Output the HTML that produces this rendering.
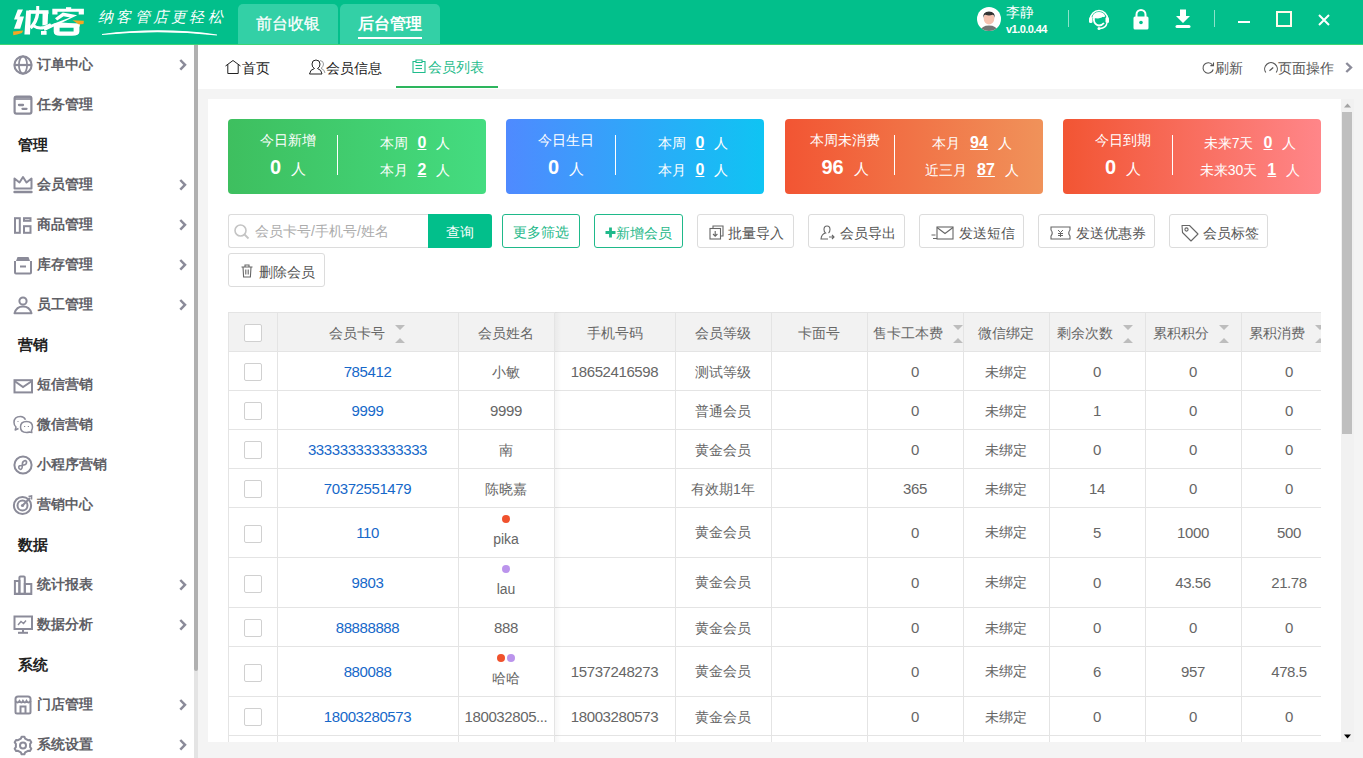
<!DOCTYPE html><html><head><meta charset="utf-8"><style>
*{box-sizing:border-box;margin:0;padding:0}
html,body{width:1363px;height:758px;overflow:hidden;background:#f4f4f4;font-family:"Liberation Sans",sans-serif;}
.abs{position:absolute}
svg{position:absolute;overflow:visible}
#hdr{position:absolute;left:0;top:0;width:1363px;height:45px;background:#02bf8b;border-bottom:1px solid #3fd474}
.htab{position:absolute;top:4px;height:40px;background:#33d0a6;border-radius:5px 5px 0 0;color:#fff;font-size:16px;text-align:center;line-height:38px;font-weight:bold}
#side{position:absolute;left:0;top:45px;width:198px;height:713px;background:#fff}
.mi{position:absolute;left:0;width:194px;height:40px;font-size:14px;color:#606066;font-weight:bold}
.mi .t{position:absolute;left:37px;top:11px;line-height:18px;white-space:nowrap}
.grp{position:absolute;left:18px;font-size:15px;color:#222;font-weight:bold;line-height:18px}
#sscroll{position:absolute;left:194px;top:45px;width:4px;height:713px;background:#e4e4e4}
#sthumb{position:absolute;left:194px;top:45px;width:4px;height:626px;background:#b0b0b0;border-radius:0 0 2px 2px}
#tabbar{position:absolute;left:198px;top:45px;width:1165px;height:44px;background:#fff}
.tt{position:absolute;top:13px;font-size:14px;color:#222;line-height:18px;white-space:nowrap}
#panel{position:absolute;left:208px;top:99px;width:1133px;height:643px;background:#fff;overflow:hidden}
</style></head><body>
<div id="hdr">
<svg style="left:0;top:0" width="90" height="40" viewBox="0 0 90 40"><path d="M17.8 9.4 H23 L19.6 16.4 H24 L20.2 28.7 H14 L17.4 19.6 H14 Z" fill="#fff"/><path d="M13 31.6 L23.2 30.4 L22 33 L17 34.6 L13.3 35.2 Z" fill="#f5a623"/><path d="M26.2 10.4 H31 L30 34.6 H24.4 Z" fill="#fff"/><path d="M29 10.2 H48.5 V13.8 H29 Z" fill="#fff"/><path d="M36.2 6 H39.2 V14 H36.2 Z" fill="#fff"/><path d="M42.6 12 H48.2 L47.6 24.5 L42.4 25.5 Z" fill="#fff"/><path d="M37.5 13.5 Q36.5 22 30.5 28" stroke="#fff" stroke-width="3.4" fill="none"/><path d="M33 25.5 Q38 29 44 27.5 Q49 26 51 24.5" stroke="#fff" stroke-width="3" fill="none"/><path d="M41 31 H46.6 V34.8 H41 Z" fill="#fff"/><path d="M66 7.2 H71.2 V9.5 H66 Z" fill="#fff"/><path d="M52.3 8.7 H83.9 V14.4 H78.7 V11.8 H57.5 V14.4 H52.3 Z" fill="#fff"/><path d="M55 18.2 L62.8 12.6 L77.2 15.2 L44.6 31 L43.4 27.6 L70 17.4 L63.6 16.2 L57.2 20.6 Z" fill="#fff"/><path d="M59.5 22.2 L80 24 L79.5 26.8 L58.5 25 Z" fill="#fff"/><path d="M53.7 23.6 H79.4 V31.5 Q79.4 35.8 72 35.8 H60 Q53.7 35.8 53.7 31.5 Z M59.6 27.8 V31.4 H73.6 V27.8 Z" fill="#fff" fill-rule="evenodd"/><path d="M72.5 20.2 L83.9 20.8 L83.5 23.9 L79 24.6 Z" fill="#f5a623"/></svg>
<div class="abs" style="left:98px;top:7px;font-size:15px;color:#fff;line-height:20px;letter-spacing:3.3px;font-style:italic;font-family:'Liberation Serif',serif">纳客管店更轻松</div>
<svg style="left:100px;top:27px" width="130" height="12"><path d="M2 7.5 Q 60 0 117 8 Q 60 1.8 2 7.5 Z" stroke="#fff" stroke-width="1.1" fill="#fff"/></svg>
<div class="htab" style="left:238px;width:100px;font-weight:normal;line-height:40px;-webkit-text-stroke:0.25px #fff">前台收银</div>
<div class="htab" style="left:340px;width:100px;line-height:40px">后台管理<div class="abs" style="left:18px;top:33px;width:64px;height:2px;background:#fff"></div></div>
<svg style="left:977px;top:7px" width="24" height="24" viewBox="0 0 24 24"><defs><clipPath id="av"><circle cx="12" cy="12" r="12"/></clipPath></defs><circle cx="12" cy="12" r="12" fill="#fff"/><g clip-path="url(#av)"><path d="M3 25 Q4 18.5 12 18.5 Q20 18.5 21 25 Z" fill="#757575"/><ellipse cx="12" cy="11.5" rx="5.3" ry="6" fill="#f5c2b0"/><path d="M6.3 11 Q5.5 4.5 12 4.5 Q18.5 4.5 17.7 11 Q17 7.5 15.5 7.8 Q12 9 8.5 7.8 Q7 7.5 6.3 11 Z" fill="#333"/></g></svg>
<div class="abs" style="left:1006px;top:2px;font-size:14px;line-height:20px;color:#fff">李静</div>
<div class="abs" style="left:1006px;top:22px;font-size:11px;line-height:14px;color:#fff;font-weight:bold;letter-spacing:-0.55px">v1.0.0.44</div>
<div class="abs" style="left:1068px;top:10px;width:1px;height:17px;background:rgba(255,255,255,0.55)"></div>
<div class="abs" style="left:1214px;top:10px;width:1px;height:17px;background:rgba(255,255,255,0.55)"></div>
<svg style="left:1088px;top:8px" width="22" height="22" viewBox="0 0 22 22"><path d="M2.5 11 A8.5 8.5 0 0 1 19.5 11" stroke="#fff" stroke-width="1.6" fill="none"/><rect x="1" y="9" width="3.5" height="6" rx="1.5" fill="#fff"/><rect x="17.5" y="9" width="3.5" height="6" rx="1.5" fill="#fff"/><path d="M5 10 Q6 5 11 5 Q15 5 16.5 8.5 L15 7 Q14 9.5 10 9.5 Q7 9.5 6 8.5 Q5.5 12 6.5 14.5 Q8.5 17.5 11 17.5 Q14 17.5 16 15" stroke="#fff" stroke-width="1.8" fill="none"/><path d="M5 10 Q4.8 6 8 5 L15 5.5 Q16.5 7 16 9 Q14 8 11 9 Q8 10 6 8.5 Z" fill="#fff"/><path d="M19 15 Q18 20 12 20.5" stroke="#fff" stroke-width="1.4" fill="none"/><circle cx="11" cy="20.5" r="1.5" fill="#fff"/></svg>
<svg style="left:1133px;top:9px" width="16" height="21" viewBox="0 0 16 21"><path d="M3.5 8 V5.5 A4.5 4.5 0 0 1 12.5 5.5 V8" stroke="#fff" stroke-width="2" fill="none"/><rect x="0.5" y="7.5" width="15" height="13" rx="1.5" fill="#fff"/><circle cx="8" cy="13.5" r="1.8" fill="#02bf8b"/></svg>
<svg style="left:1175px;top:9px" width="16" height="20" viewBox="0 0 16 20"><path d="M5 0.5 H11 V7 H15 L8 14 L1 7 H5 Z" fill="#fff"/><rect x="0.5" y="16" width="15" height="3" rx="1.5" fill="#fff"/></svg>
<div class="abs" style="left:1238px;top:21px;width:12px;height:2px;background:#fff"></div>
<div class="abs" style="left:1276px;top:11px;width:16px;height:16px;border:2px solid #fffbea"></div>
<svg style="left:1318px;top:14px" width="12" height="12"><path d="M1 1 L11 11 M11 1 L1 11" stroke="#fff" stroke-width="2"/></svg>
</div>
<div id="side">
<div class="mi" style="top:-1px"><svg style="left:13px;top:11px" width="20" height="20" viewBox="0 0 20 20"><circle cx="10" cy="10" r="8.6" stroke="#8b8b99" stroke-width="2.1" fill="none"/><ellipse cx="10" cy="10" rx="4.1" ry="8.6" stroke="#8b8b99" stroke-width="1.8" fill="none"/><line x1="1.5" y1="10" x2="18.5" y2="10" stroke="#8b8b99" stroke-width="2.2"/></svg><div class="t">订单中心</div>
<svg style="left:179px;top:15px" width="8" height="12"><polyline points="1.3,1 6,5.8 1.3,10.6" stroke="#8b8b99" stroke-width="2.5" fill="none"/></svg>
</div>
<div class="mi" style="top:39px"><svg style="left:13px;top:11px" width="20" height="20" viewBox="0 0 20 20"><rect x="1.6" y="1.6" width="16.8" height="17" rx="1.8" stroke="#8b8b99" stroke-width="2.2" fill="none"/><rect x="1.6" y="1.6" width="16.8" height="3.4" fill="#8b8b99" fill-opacity="0.85"/><line x1="6" y1="10" x2="10" y2="10" stroke="#8b8b99" stroke-width="2.3" stroke-linecap="round"/><line x1="9.5" y1="13.8" x2="13.5" y2="13.8" stroke="#8b8b99" stroke-width="2.3" stroke-linecap="round"/></svg><div class="t">任务管理</div>
</div>
<div class="grp" style="top:91px">管理</div>
<div class="mi" style="top:119px"><svg style="left:13px;top:11px" width="20" height="20" viewBox="0 0 20 20"><path d="M1.5 13.5 V3.5 L6.5 7.5 L10 2 L13.5 7.5 L18.5 3.5 V13.5 Z" stroke="#8b8b99" stroke-width="2" fill="none" stroke-linejoin="round"/><line x1="1.5" y1="17" x2="18.5" y2="17" stroke="#8b8b99" stroke-width="2.4" stroke-linecap="round"/></svg><div class="t">会员管理</div>
<svg style="left:179px;top:15px" width="8" height="12"><polyline points="1.3,1 6,5.8 1.3,10.6" stroke="#8b8b99" stroke-width="2.5" fill="none"/></svg>
</div>
<div class="mi" style="top:159px"><svg style="left:13px;top:11px" width="20" height="20" viewBox="0 0 20 20"><rect x="2" y="3.2" width="4.8" height="14.6" stroke="#8b8b99" stroke-width="2" fill="none"/><rect x="11" y="3.2" width="6.5" height="2.6" stroke="#8b8b99" stroke-width="2" fill="none"/><rect x="11" y="11.2" width="6.5" height="6.6" stroke="#8b8b99" stroke-width="2" fill="none"/></svg><div class="t">商品管理</div>
<svg style="left:179px;top:15px" width="8" height="12"><polyline points="1.3,1 6,5.8 1.3,10.6" stroke="#8b8b99" stroke-width="2.5" fill="none"/></svg>
</div>
<div class="mi" style="top:199px"><svg style="left:13px;top:11px" width="20" height="20" viewBox="0 0 20 20"><path d="M3 6 L4.5 2 H15.5 L17 6 Z" fill="#8b8b99"/><path d="M2 6 V17.5 Q2 18.5 3 18.5 H17 Q18 18.5 18 17.5 V6" stroke="#8b8b99" stroke-width="2" fill="none"/><line x1="7" y1="11.5" x2="13" y2="11.5" stroke="#8b8b99" stroke-width="2" fill="none"/></svg><div class="t">库存管理</div>
<svg style="left:179px;top:15px" width="8" height="12"><polyline points="1.3,1 6,5.8 1.3,10.6" stroke="#8b8b99" stroke-width="2.5" fill="none"/></svg>
</div>
<div class="mi" style="top:239px"><svg style="left:13px;top:11px" width="20" height="20" viewBox="0 0 20 20"><circle cx="10" cy="6" r="3.6" stroke="#8b8b99" stroke-width="2" fill="none"/><path d="M1.5 18.2 Q3.5 11.5 10 11.5 Q16.5 11.5 18.5 18.2 Z" stroke="#8b8b99" stroke-width="2" fill="none" stroke-linejoin="round"/></svg><div class="t">员工管理</div>
<svg style="left:179px;top:15px" width="8" height="12"><polyline points="1.3,1 6,5.8 1.3,10.6" stroke="#8b8b99" stroke-width="2.5" fill="none"/></svg>
</div>
<div class="grp" style="top:291px">营销</div>
<div class="mi" style="top:319px"><svg style="left:13px;top:11px" width="20" height="20" viewBox="0 0 20 20"><rect x="1.5" y="5.2" width="17.5" height="12.2" stroke="#8b8b99" stroke-width="2" fill="none"/><polyline points="1.5,6 10,12 19,6" stroke="#8b8b99" stroke-width="2" fill="none"/></svg><div class="t">短信营销</div>
</div>
<div class="mi" style="top:359px"><svg style="left:13px;top:11px" width="20" height="20" viewBox="0 0 20 20"><path d="M12.5 4.8 Q11 1.5 7.5 1.5 Q1 1.5 1 7.5 Q1 10.5 3 12 L2.2 15 L5.5 13.5" stroke="#8b8b99" stroke-width="1.5" fill="none" stroke-linejoin="round"/><path d="M18.8 17.5 L18.5 15.5 Q19.5 14 19.5 12 Q19.5 6.5 13.5 6.5 Q7.5 6.5 7.5 12 Q7.5 17.5 13.5 17.5 Q15 17.5 16.5 17 Z" stroke="#8b8b99" stroke-width="1.5" fill="#fff" stroke-linejoin="round"/><line x1="11" y1="11.5" x2="12.2" y2="11.5" stroke="#8b8b99" stroke-width="1.2"/><line x1="14.8" y1="11.5" x2="16" y2="11.5" stroke="#8b8b99" stroke-width="1.2"/><line x1="4.5" y1="6.5" x2="5.5" y2="6.5" stroke="#8b8b99" stroke-width="1.2"/></svg><div class="t">微信营销</div>
</div>
<div class="mi" style="top:399px"><svg style="left:13px;top:11px" width="20" height="20" viewBox="0 0 20 20"><circle cx="10" cy="10" r="8.6" stroke="#8b8b99" stroke-width="2" fill="none"/><path d="M6 13.5 Q5 10.5 8 10.5 L11 10 Q14 9.5 13.5 6.5 Q12.5 5 11 6 Q9 7 9.5 10 L9 13 Q8 15.5 6 13.5" stroke="#8b8b99" stroke-width="1.6" fill="none"/></svg><div class="t">小程序营销</div>
</div>
<div class="mi" style="top:439px"><svg style="left:13px;top:11px" width="20" height="20" viewBox="0 0 20 20"><circle cx="9.5" cy="10.5" r="8.6" stroke="#8b8b99" stroke-width="2" fill="none"/><circle cx="9.5" cy="10.5" r="5" stroke="#8b8b99" stroke-width="2" fill="none"/><circle cx="9.5" cy="10.5" r="1.6" fill="#8b8b99"/><line x1="9.5" y1="10.5" x2="17" y2="3" stroke="#8b8b99" stroke-width="2" fill="none"/><path d="M15.5 1.5 L18.5 1 L18.5 4.5" stroke="#8b8b99" stroke-width="1.6" fill="none"/></svg><div class="t">营销中心</div>
</div>
<div class="grp" style="top:491px">数据</div>
<div class="mi" style="top:519px"><svg style="left:13px;top:11px" width="20" height="20" viewBox="0 0 20 20"><rect x="1.9" y="6" width="4.5" height="13" stroke="#8b8b99" stroke-width="2" fill="none"/><rect x="6.4" y="1.5" width="5.4" height="17.5" rx="1" stroke="#8b8b99" stroke-width="2" fill="none"/><rect x="11.8" y="9" width="6.5" height="10" stroke="#8b8b99" stroke-width="2" fill="none"/><line x1="1" y1="18.8" x2="19" y2="18.8" stroke="#8b8b99" stroke-width="2.2"/></svg><div class="t">统计报表</div>
<svg style="left:179px;top:15px" width="8" height="12"><polyline points="1.3,1 6,5.8 1.3,10.6" stroke="#8b8b99" stroke-width="2.5" fill="none"/></svg>
</div>
<div class="mi" style="top:559px"><svg style="left:13px;top:11px" width="20" height="20" viewBox="0 0 20 20"><rect x="1.5" y="1.5" width="17.5" height="12.5" stroke="#8b8b99" stroke-width="2" fill="none"/><line x1="10" y1="14" x2="10" y2="17" stroke="#8b8b99" stroke-width="2" fill="none"/><line x1="5" y1="17.8" x2="15" y2="17.8" stroke="#8b8b99" stroke-width="2"/><polyline points="5,10 8,6.5 10.5,8.5 13,5.5" stroke="#8b8b99" stroke-width="1.4" fill="none"/></svg><div class="t">数据分析</div>
<svg style="left:179px;top:15px" width="8" height="12"><polyline points="1.3,1 6,5.8 1.3,10.6" stroke="#8b8b99" stroke-width="2.5" fill="none"/></svg>
</div>
<div class="grp" style="top:611px">系统</div>
<div class="mi" style="top:639px"><svg style="left:13px;top:11px" width="20" height="20" viewBox="0 0 20 20"><path d="M2.5 4 Q2.5 1.5 5 1.5 H15 Q17.5 1.5 17.5 4 V6.5" stroke="#8b8b99" stroke-width="2" fill="none"/><path d="M2.5 4 V17 Q2.5 18.5 4 18.5 H16 Q17.5 18.5 17.5 17 V6" stroke="#8b8b99" stroke-width="2" fill="none"/><path d="M2.5 6 Q4.5 9 6.5 6 Q8.5 9 10 6 Q12 9 13.5 6 Q15.5 9 17.5 6" stroke="#8b8b99" stroke-width="2" fill="none"/><path d="M7.5 18.5 V11.5 H12.5 V18.5" stroke="#8b8b99" stroke-width="2" fill="none"/></svg><div class="t">门店管理</div>
<svg style="left:179px;top:15px" width="8" height="12"><polyline points="1.3,1 6,5.8 1.3,10.6" stroke="#8b8b99" stroke-width="2.5" fill="none"/></svg>
</div>
<div class="mi" style="top:679px"><svg style="left:13px;top:11px" width="20" height="20" viewBox="0 0 20 20"><path d="M7.87 3.52 L8.61 1.71 L11.39 1.71 L12.13 3.52 L14.98 5.16 L16.92 4.90 L18.31 7.31 L17.11 8.86 L17.11 12.14 L18.31 13.69 L16.92 16.10 L14.98 15.84 L12.13 17.48 L11.39 19.29 L8.61 19.29 L7.87 17.48 L5.02 15.84 L3.08 16.10 L1.69 13.69 L2.89 12.14 L2.89 8.86 L1.69 7.31 L3.08 4.90 L5.02 5.16 Z" stroke="#8b8b99" stroke-width="2" fill="none" stroke-linejoin="round"/><circle cx="10" cy="10.5" r="3" stroke="#8b8b99" stroke-width="2" fill="none"/></svg><div class="t">系统设置</div>
<svg style="left:179px;top:15px" width="8" height="12"><polyline points="1.3,1 6,5.8 1.3,10.6" stroke="#8b8b99" stroke-width="2.5" fill="none"/></svg>
</div>
</div>
<div id="sscroll"></div><div id="sthumb"></div>
<div id="tabbar"></div>
<svg style="left:225px;top:60px" width="16" height="15"><path d="M0.5 6 L8 0.5 L15.5 6 M2.8 4.3 V13.5 H13.2 V4.3" stroke="#222" stroke-width="1" fill="none"/></svg>
<div class="tt" style="left:242px;top:59px">首页</div>
<svg style="left:309px;top:59px" width="17" height="16"><path d="M7 1 Q3 1 3 5 Q3 8.5 5.5 9.5 Q1 10.5 0.5 15 H13 Q12.5 10.5 8.5 9.5 Q11 8.5 11 5 Q11 1 7 1 Z" stroke="#222" stroke-width="1" fill="none"/><path d="M11 1.5 Q14.5 2 14.5 5 Q14.5 8 12 9.3 Q15.5 10.5 16 14" stroke="#999" stroke-width="1" fill="none"/></svg>
<div class="tt" style="left:326px;top:59px">会员信息</div>
<svg style="left:412px;top:59px" width="14" height="15"><path d="M4 2.5 H1 V13.5 H13 V2.5 H10" stroke="#1fbc8c" stroke-width="1.1" fill="none"/><path d="M4 3.5 V1 H10 V3.5 Z" stroke="#1fbc8c" stroke-width="1.1" fill="none"/><line x1="3.5" y1="6.5" x2="10" y2="6.5" stroke="#1fbc8c" stroke-width="1.1"/><line x1="3.5" y1="9.5" x2="10" y2="9.5" stroke="#1fbc8c" stroke-width="1.1"/></svg>
<div class="tt" style="left:428px;top:58px;color:#1fbc8c">会员列表</div>
<div class="abs" style="left:396px;top:86px;width:102px;height:2px;background:#2db55d"></div>
<svg style="left:1202px;top:62px" width="13" height="12"><path d="M10.5 3 A5.2 5.2 0 1 0 11.2 7.5" stroke="#555" stroke-width="1.1" fill="none"/><path d="M11.5 0.5 V3.6 H8.4" stroke="#555" stroke-width="1.1" fill="none"/></svg>
<div class="tt" style="left:1215px;top:59px;color:#555">刷新</div>
<svg style="left:1264px;top:61px" width="14" height="15"><path d="M1.8 11.5 A6.3 6.3 0 1 1 12.2 11.5" stroke="#555" stroke-width="1.1" fill="none"/><line x1="5.5" y1="9.8" x2="9.2" y2="6.5" stroke="#555" stroke-width="1.2"/></svg>
<div class="tt" style="left:1278px;top:59px;color:#555">页面操作</div>
<svg style="left:1345px;top:62px" width="8" height="11"><polyline points="1.3,1 6,5.5 1.3,10" stroke="#8b8b99" stroke-width="2.4" fill="none"/></svg>
<div id="panel">
<div class="abs card" style="left:20px;top:20px;width:258px;height:75px;border-radius:4px;background:linear-gradient(90deg,#3ebf5f,#44dc80);color:#fff">
<div class="abs" style="left:0;width:120px;top:12px;text-align:center;font-size:14px;line-height:18px">今日新增</div>
<div class="abs" style="left:0;width:120px;top:36px;text-align:center;line-height:24px;white-space:nowrap"><span style="font-size:20px;font-weight:bold">0</span><span style="font-size:15px;margin-left:10px">人</span></div>
<div class="abs" style="left:109px;top:16px;width:1px;height:40px;background:#fff"></div>
<div class="abs" style="left:112px;width:150px;top:15px;text-align:center;line-height:18px;font-size:14px;white-space:nowrap">本周<span style="font-size:16px;font-weight:bold;text-decoration:underline;margin:0 10px">0</span>人</div>
<div class="abs" style="left:112px;width:150px;top:42px;text-align:center;line-height:18px;font-size:14px;white-space:nowrap">本月<span style="font-size:16px;font-weight:bold;text-decoration:underline;margin:0 10px">2</span>人</div>
</div>
<div class="abs card" style="left:298px;top:20px;width:258px;height:75px;border-radius:4px;background:linear-gradient(90deg,#4f8aff,#0fc4f3);color:#fff">
<div class="abs" style="left:0;width:120px;top:12px;text-align:center;font-size:14px;line-height:18px">今日生日</div>
<div class="abs" style="left:0;width:120px;top:36px;text-align:center;line-height:24px;white-space:nowrap"><span style="font-size:20px;font-weight:bold">0</span><span style="font-size:15px;margin-left:10px">人</span></div>
<div class="abs" style="left:109px;top:16px;width:1px;height:40px;background:#fff"></div>
<div class="abs" style="left:112px;width:150px;top:15px;text-align:center;line-height:18px;font-size:14px;white-space:nowrap">本周<span style="font-size:16px;font-weight:bold;text-decoration:underline;margin:0 10px">0</span>人</div>
<div class="abs" style="left:112px;width:150px;top:42px;text-align:center;line-height:18px;font-size:14px;white-space:nowrap">本月<span style="font-size:16px;font-weight:bold;text-decoration:underline;margin:0 10px">0</span>人</div>
</div>
<div class="abs card" style="left:577px;top:20px;width:258px;height:75px;border-radius:4px;background:linear-gradient(90deg,#f25533,#f0925a);color:#fff">
<div class="abs" style="left:0;width:120px;top:12px;text-align:center;font-size:14px;line-height:18px">本周未消费</div>
<div class="abs" style="left:0;width:120px;top:36px;text-align:center;line-height:24px;white-space:nowrap"><span style="font-size:20px;font-weight:bold">96</span><span style="font-size:15px;margin-left:10px">人</span></div>
<div class="abs" style="left:109px;top:16px;width:1px;height:40px;background:#fff"></div>
<div class="abs" style="left:112px;width:150px;top:15px;text-align:center;line-height:18px;font-size:14px;white-space:nowrap">本月<span style="font-size:16px;font-weight:bold;text-decoration:underline;margin:0 10px">94</span>人</div>
<div class="abs" style="left:112px;width:150px;top:42px;text-align:center;line-height:18px;font-size:14px;white-space:nowrap">近三月<span style="font-size:16px;font-weight:bold;text-decoration:underline;margin:0 10px">87</span>人</div>
</div>
<div class="abs card" style="left:855px;top:20px;width:258px;height:75px;border-radius:4px;background:linear-gradient(90deg,#f25533,#ff8689);color:#fff">
<div class="abs" style="left:0;width:120px;top:12px;text-align:center;font-size:14px;line-height:18px">今日到期</div>
<div class="abs" style="left:0;width:120px;top:36px;text-align:center;line-height:24px;white-space:nowrap"><span style="font-size:20px;font-weight:bold">0</span><span style="font-size:15px;margin-left:10px">人</span></div>
<div class="abs" style="left:109px;top:16px;width:1px;height:40px;background:#fff"></div>
<div class="abs" style="left:112px;width:150px;top:15px;text-align:center;line-height:18px;font-size:14px;white-space:nowrap">未来7天<span style="font-size:16px;font-weight:bold;text-decoration:underline;margin:0 10px">0</span>人</div>
<div class="abs" style="left:112px;width:150px;top:42px;text-align:center;line-height:18px;font-size:14px;white-space:nowrap">未来30天<span style="font-size:16px;font-weight:bold;text-decoration:underline;margin:0 10px">1</span>人</div>
</div>
<div class="abs" style="left:20px;top:115px;width:200px;height:34px;border:1px solid #dcdcdc;border-right:none;border-radius:3px 0 0 3px;background:#fff">
<svg style="left:5px;top:9px" width="16" height="16"><circle cx="6.5" cy="6.5" r="5.5" stroke="#c4c4c4" stroke-width="1.6" fill="none"/><line x1="10.5" y1="10.5" x2="14.5" y2="14.5" stroke="#c4c4c4" stroke-width="1.8"/></svg>
<div class="abs" style="left:26px;top:7px;font-size:14px;line-height:18px;color:#acacac;white-space:nowrap">会员卡号/手机号/姓名</div></div>
<div class="abs" style="left:220px;top:115px;width:64px;height:34px;background:#02bf8b;border-radius:0 3px 3px 0;color:#fff;font-size:14px;line-height:36px;text-align:center">查询</div>
<div class="abs" style="left:294px;top:115px;width:78px;height:34px;border:1px solid #1fb98a;border-radius:3px;color:#1fb98a;font-size:14px;line-height:35px;text-align:center;background:#fff">更多筛选</div>
<div class="abs" style="left:386px;top:115px;width:89px;height:34px;border:1px solid #1fb98a;border-radius:3px;color:#1fb98a;font-size:14px;line-height:32px;background:#fff">
<svg style="left:10px;top:12px" width="11" height="11"><path d="M5.5 0.5 V10.5 M0.5 5.5 H10.5" stroke="#1fb98a" stroke-width="2.8"/></svg><div class="abs" style="left:21px;top:9px;line-height:18px;white-space:nowrap">新增会员</div></div>
<div class="abs" style="left:489px;top:115px;width:97px;height:34px;border:1px solid #dcdcdc;border-radius:3px;background:#fff">
<svg style="left:11px;top:10px" width="15" height="15"><path d="M4 3 V1 H14 V11 H12" stroke="#666" stroke-width="1.1" fill="none"/><rect x="1" y="3.5" width="10.5" height="10.5" stroke="#666" stroke-width="1.1" fill="none"/><path d="M6.2 6 V11 M4 9 L6.2 11.2 L8.4 9" stroke="#666" stroke-width="1.1" fill="none"/></svg>
<div class="abs" style="left:30px;top:9px;font-size:14px;line-height:18px;color:#555;white-space:nowrap">批量导入</div></div>
<div class="abs" style="left:600px;top:115px;width:97px;height:34px;border:1px solid #dcdcdc;border-radius:3px;background:#fff">
<svg style="left:11px;top:10px" width="15" height="15"><path d="M7 1 Q4 1 4 4.5 Q4 7 5.5 8 Q1.5 9 1 14 H8" stroke="#666" stroke-width="1.1" fill="none"/><path d="M7 1 Q10 1 10 4.5 Q10 7 8.5 8" stroke="#666" stroke-width="1.1" fill="none"/><path d="M9 12 H14 M12 10 L14 12 L12 14" stroke="#666" stroke-width="1.1" fill="none"/></svg>
<div class="abs" style="left:31px;top:9px;font-size:14px;line-height:18px;color:#555;white-space:nowrap">会员导出</div></div>
<div class="abs" style="left:711px;top:115px;width:105px;height:34px;border:1px solid #dcdcdc;border-radius:3px;background:#fff">
<svg style="left:11px;top:11px" width="23" height="14"><rect x="6" y="1" width="16" height="12" stroke="#666" stroke-width="1.1" fill="none"/><polyline points="6,1.5 14,7.5 22,1.5" stroke="#666" stroke-width="1.1" fill="none"/><path d="M0.5 9 H4.5 M2 12.5 H6" stroke="#666" stroke-width="1.1" fill="none"/></svg>
<div class="abs" style="left:39px;top:9px;font-size:14px;line-height:18px;color:#555;white-space:nowrap">发送短信</div></div>
<div class="abs" style="left:830px;top:115px;width:117px;height:34px;border:1px solid #dcdcdc;border-radius:3px;background:#fff">
<svg style="left:11px;top:11px" width="21" height="14"><path d="M1 1 H20 V4 Q17.5 7 20 10 V13 H1 V10 Q3.5 7 1 4 Z" stroke="#666" stroke-width="1.1" fill="none"/><path d="M8 4 L10.5 6.5 L13 4 M10.5 6.5 V11 M8 7.5 H13 M8 9.5 H13" stroke="#666" stroke-width="1" fill="none"/></svg>
<div class="abs" style="left:37px;top:9px;font-size:14px;line-height:18px;color:#555;white-space:nowrap">发送优惠券</div></div>
<div class="abs" style="left:961px;top:115px;width:99px;height:34px;border:1px solid #dcdcdc;border-radius:3px;background:#fff">
<svg style="left:11px;top:9px" width="18" height="18"><path d="M1 1.5 H8.5 L17 10 L10 17 L1.5 8.5 Z" stroke="#666" stroke-width="1.1" fill="none" stroke-linejoin="round"/><circle cx="5.5" cy="5.5" r="1.6" stroke="#666" stroke-width="1.1" fill="none"/></svg>
<div class="abs" style="left:33px;top:9px;font-size:14px;line-height:18px;color:#555;white-space:nowrap">会员标签</div></div>
<div class="abs" style="left:20px;top:154px;width:97px;height:34px;border:1px solid #dcdcdc;border-radius:3px;background:#fff">
<svg style="left:12px;top:10px" width="12" height="14"><path d="M0.5 3 H11.5 M4 3 V1 H8 V3 M2 3 L2.6 13 H9.4 L10 3 M4.8 5.5 V10.5 M7.2 5.5 V10.5" stroke="#666" stroke-width="1.1" fill="none"/></svg>
<div class="abs" style="left:30px;top:9px;font-size:14px;line-height:18px;color:#555;white-space:nowrap">删除会员</div></div>
<div class="abs" style="left:20px;top:213px;width:1093px;height:430px;overflow:hidden">
<div class="abs" style="left:0;top:0;width:1200px;height:39px;background:#f2f2f2"></div>
<div class="abs" style="left:0;top:0px;width:1200px;height:1px;background:#e4e4e4"></div>
<div class="abs" style="left:0;top:39px;width:1200px;height:1px;background:#e4e4e4"></div>
<div class="abs" style="left:0;top:78px;width:1200px;height:1px;background:#e4e4e4"></div>
<div class="abs" style="left:0;top:117px;width:1200px;height:1px;background:#e4e4e4"></div>
<div class="abs" style="left:0;top:156px;width:1200px;height:1px;background:#e4e4e4"></div>
<div class="abs" style="left:0;top:195px;width:1200px;height:1px;background:#e4e4e4"></div>
<div class="abs" style="left:0;top:245px;width:1200px;height:1px;background:#e4e4e4"></div>
<div class="abs" style="left:0;top:295px;width:1200px;height:1px;background:#e4e4e4"></div>
<div class="abs" style="left:0;top:334px;width:1200px;height:1px;background:#e4e4e4"></div>
<div class="abs" style="left:0;top:384px;width:1200px;height:1px;background:#e4e4e4"></div>
<div class="abs" style="left:0;top:423px;width:1200px;height:1px;background:#e4e4e4"></div>
<div class="abs" style="left:0;top:462px;width:1200px;height:1px;background:#e4e4e4"></div>
<div class="abs" style="left:0px;top:0;width:1px;height:500px;background:#e4e4e4"></div>
<div class="abs" style="left:49px;top:0;width:1px;height:500px;background:#e4e4e4"></div>
<div class="abs" style="left:230px;top:0;width:1px;height:500px;background:#e4e4e4"></div>
<div class="abs" style="left:326px;top:0;width:1px;height:500px;background:#e4e4e4"></div>
<div class="abs" style="left:447px;top:0;width:1px;height:500px;background:#e4e4e4"></div>
<div class="abs" style="left:543px;top:0;width:1px;height:500px;background:#e4e4e4"></div>
<div class="abs" style="left:639px;top:0;width:1px;height:500px;background:#e4e4e4"></div>
<div class="abs" style="left:735px;top:0;width:1px;height:500px;background:#e4e4e4"></div>
<div class="abs" style="left:821px;top:0;width:1px;height:500px;background:#e4e4e4"></div>
<div class="abs" style="left:917px;top:0;width:1px;height:500px;background:#e4e4e4"></div>
<div class="abs" style="left:1013px;top:0;width:1px;height:500px;background:#e4e4e4"></div>
<div class="abs" style="left:1109px;top:0;width:1px;height:500px;background:#e4e4e4"></div>
<div class="abs" style="left:327px;top:0;width:6px;height:500px;background:linear-gradient(90deg,rgba(0,0,0,0.035),rgba(0,0,0,0))"></div>
<div class="abs" style="left:16px;top:12px;width:18px;height:18px;border:1px solid #d0d0d0;border-radius:2px;background:#fff"></div>
<div class="abs" style="left:48px;width:181px;top:2px;height:39px;display:flex;flex-direction:column;align-items:center;justify-content:center;font-size:14px;color:#666;white-space:nowrap"><div style="display:flex;align-items:center">会员卡号<svg style="position:relative;display:inline-block;vertical-align:middle;margin-left:10px" width="10" height="18"><path d="M0 0 H10 L5 5 Z M0 18 H10 L5 13 Z" fill="#bdbdbd"/></svg></div></div>
<div class="abs" style="left:230px;width:96px;top:2px;height:39px;display:flex;flex-direction:column;align-items:center;justify-content:center;font-size:14px;color:#666;white-space:nowrap"><div style="display:flex;align-items:center">会员姓名</div></div>
<div class="abs" style="left:326px;width:121px;top:2px;height:39px;display:flex;flex-direction:column;align-items:center;justify-content:center;font-size:14px;color:#666;white-space:nowrap"><div style="display:flex;align-items:center">手机号码</div></div>
<div class="abs" style="left:447px;width:96px;top:2px;height:39px;display:flex;flex-direction:column;align-items:center;justify-content:center;font-size:14px;color:#666;white-space:nowrap"><div style="display:flex;align-items:center">会员等级</div></div>
<div class="abs" style="left:543px;width:96px;top:2px;height:39px;display:flex;flex-direction:column;align-items:center;justify-content:center;font-size:14px;color:#666;white-space:nowrap"><div style="display:flex;align-items:center">卡面号</div></div>
<div class="abs" style="left:642px;width:96px;top:2px;height:39px;display:flex;flex-direction:column;align-items:center;justify-content:center;font-size:14px;color:#666;white-space:nowrap"><div style="display:flex;align-items:center">售卡工本费<svg style="position:relative;display:inline-block;vertical-align:middle;margin-left:10px" width="10" height="18"><path d="M0 0 H10 L5 5 Z M0 18 H10 L5 13 Z" fill="#bdbdbd"/></svg></div></div>
<div class="abs" style="left:735px;width:86px;top:2px;height:39px;display:flex;flex-direction:column;align-items:center;justify-content:center;font-size:14px;color:#666;white-space:nowrap"><div style="display:flex;align-items:center">微信绑定</div></div>
<div class="abs" style="left:819px;width:96px;top:2px;height:39px;display:flex;flex-direction:column;align-items:center;justify-content:center;font-size:14px;color:#666;white-space:nowrap"><div style="display:flex;align-items:center">剩余次数<svg style="position:relative;display:inline-block;vertical-align:middle;margin-left:10px" width="10" height="18"><path d="M0 0 H10 L5 5 Z M0 18 H10 L5 13 Z" fill="#bdbdbd"/></svg></div></div>
<div class="abs" style="left:915px;width:96px;top:2px;height:39px;display:flex;flex-direction:column;align-items:center;justify-content:center;font-size:14px;color:#666;white-space:nowrap"><div style="display:flex;align-items:center">累积积分<svg style="position:relative;display:inline-block;vertical-align:middle;margin-left:10px" width="10" height="18"><path d="M0 0 H10 L5 5 Z M0 18 H10 L5 13 Z" fill="#bdbdbd"/></svg></div></div>
<div class="abs" style="left:1011px;width:96px;top:2px;height:39px;display:flex;flex-direction:column;align-items:center;justify-content:center;font-size:14px;color:#666;white-space:nowrap"><div style="display:flex;align-items:center">累积消费<svg style="position:relative;display:inline-block;vertical-align:middle;margin-left:10px" width="10" height="18"><path d="M0 0 H10 L5 5 Z M0 18 H10 L5 13 Z" fill="#bdbdbd"/></svg></div></div>
<div class="abs" style="left:16px;top:51px;width:18px;height:18px;border:1px solid #d0d0d0;border-radius:2px;background:#fff"></div>
<div class="abs" style="left:49px;width:181px;top:40px;height:39px;display:flex;flex-direction:column;align-items:center;justify-content:center;font-size:14px;color:#1668c9;white-space:nowrap"><span style="font-size:15px;letter-spacing:-0.4px">785412</span></div>
<div class="abs" style="left:230px;width:96px;top:40px;height:39px;display:flex;flex-direction:column;align-items:center;justify-content:center;font-size:14px;color:#666;white-space:nowrap"><span style="position:relative;top:1px">小敏</span></div>
<div class="abs" style="left:326px;width:121px;top:40px;height:39px;display:flex;flex-direction:column;align-items:center;justify-content:center;font-size:14px;color:#666;white-space:nowrap"><span style="font-size:15px;letter-spacing:-0.4px">18652416598</span></div>
<div class="abs" style="left:447px;width:96px;top:40px;height:39px;display:flex;flex-direction:column;align-items:center;justify-content:center;font-size:14px;color:#666;white-space:nowrap"><span style="position:relative;top:1px">测试等级</span></div>
<div class="abs" style="left:543px;width:96px;top:40px;height:39px;display:flex;flex-direction:column;align-items:center;justify-content:center;font-size:14px;color:#666;white-space:nowrap"></div>
<div class="abs" style="left:639px;width:96px;top:40px;height:39px;display:flex;flex-direction:column;align-items:center;justify-content:center;font-size:14px;color:#666;white-space:nowrap"><span style="font-size:15px;letter-spacing:-0.4px">0</span></div>
<div class="abs" style="left:735px;width:86px;top:40px;height:39px;display:flex;flex-direction:column;align-items:center;justify-content:center;font-size:14px;color:#666;white-space:nowrap"><span style="position:relative;top:1px">未绑定</span></div>
<div class="abs" style="left:821px;width:96px;top:40px;height:39px;display:flex;flex-direction:column;align-items:center;justify-content:center;font-size:14px;color:#666;white-space:nowrap"><span style="font-size:15px;letter-spacing:-0.4px">0</span></div>
<div class="abs" style="left:917px;width:96px;top:40px;height:39px;display:flex;flex-direction:column;align-items:center;justify-content:center;font-size:14px;color:#666;white-space:nowrap"><span style="font-size:15px;letter-spacing:-0.4px">0</span></div>
<div class="abs" style="left:1013px;width:96px;top:40px;height:39px;display:flex;flex-direction:column;align-items:center;justify-content:center;font-size:14px;color:#666;white-space:nowrap"><span style="font-size:15px;letter-spacing:-0.4px">0</span></div>
<div class="abs" style="left:16px;top:90px;width:18px;height:18px;border:1px solid #d0d0d0;border-radius:2px;background:#fff"></div>
<div class="abs" style="left:49px;width:181px;top:79px;height:39px;display:flex;flex-direction:column;align-items:center;justify-content:center;font-size:14px;color:#1668c9;white-space:nowrap"><span style="font-size:15px;letter-spacing:-0.4px">9999</span></div>
<div class="abs" style="left:230px;width:96px;top:79px;height:39px;display:flex;flex-direction:column;align-items:center;justify-content:center;font-size:14px;color:#666;white-space:nowrap"><span style="font-size:15px;letter-spacing:-0.4px">9999</span></div>
<div class="abs" style="left:326px;width:121px;top:79px;height:39px;display:flex;flex-direction:column;align-items:center;justify-content:center;font-size:14px;color:#666;white-space:nowrap"></div>
<div class="abs" style="left:447px;width:96px;top:79px;height:39px;display:flex;flex-direction:column;align-items:center;justify-content:center;font-size:14px;color:#666;white-space:nowrap"><span style="position:relative;top:1px">普通会员</span></div>
<div class="abs" style="left:543px;width:96px;top:79px;height:39px;display:flex;flex-direction:column;align-items:center;justify-content:center;font-size:14px;color:#666;white-space:nowrap"></div>
<div class="abs" style="left:639px;width:96px;top:79px;height:39px;display:flex;flex-direction:column;align-items:center;justify-content:center;font-size:14px;color:#666;white-space:nowrap"><span style="font-size:15px;letter-spacing:-0.4px">0</span></div>
<div class="abs" style="left:735px;width:86px;top:79px;height:39px;display:flex;flex-direction:column;align-items:center;justify-content:center;font-size:14px;color:#666;white-space:nowrap"><span style="position:relative;top:1px">未绑定</span></div>
<div class="abs" style="left:821px;width:96px;top:79px;height:39px;display:flex;flex-direction:column;align-items:center;justify-content:center;font-size:14px;color:#666;white-space:nowrap"><span style="font-size:15px;letter-spacing:-0.4px">1</span></div>
<div class="abs" style="left:917px;width:96px;top:79px;height:39px;display:flex;flex-direction:column;align-items:center;justify-content:center;font-size:14px;color:#666;white-space:nowrap"><span style="font-size:15px;letter-spacing:-0.4px">0</span></div>
<div class="abs" style="left:1013px;width:96px;top:79px;height:39px;display:flex;flex-direction:column;align-items:center;justify-content:center;font-size:14px;color:#666;white-space:nowrap"><span style="font-size:15px;letter-spacing:-0.4px">0</span></div>
<div class="abs" style="left:16px;top:129px;width:18px;height:18px;border:1px solid #d0d0d0;border-radius:2px;background:#fff"></div>
<div class="abs" style="left:49px;width:181px;top:118px;height:39px;display:flex;flex-direction:column;align-items:center;justify-content:center;font-size:14px;color:#1668c9;white-space:nowrap"><span style="font-size:15px;letter-spacing:-0.4px">333333333333333</span></div>
<div class="abs" style="left:230px;width:96px;top:118px;height:39px;display:flex;flex-direction:column;align-items:center;justify-content:center;font-size:14px;color:#666;white-space:nowrap"><span style="position:relative;top:1px">南</span></div>
<div class="abs" style="left:326px;width:121px;top:118px;height:39px;display:flex;flex-direction:column;align-items:center;justify-content:center;font-size:14px;color:#666;white-space:nowrap"></div>
<div class="abs" style="left:447px;width:96px;top:118px;height:39px;display:flex;flex-direction:column;align-items:center;justify-content:center;font-size:14px;color:#666;white-space:nowrap"><span style="position:relative;top:1px">黄金会员</span></div>
<div class="abs" style="left:543px;width:96px;top:118px;height:39px;display:flex;flex-direction:column;align-items:center;justify-content:center;font-size:14px;color:#666;white-space:nowrap"></div>
<div class="abs" style="left:639px;width:96px;top:118px;height:39px;display:flex;flex-direction:column;align-items:center;justify-content:center;font-size:14px;color:#666;white-space:nowrap"><span style="font-size:15px;letter-spacing:-0.4px">0</span></div>
<div class="abs" style="left:735px;width:86px;top:118px;height:39px;display:flex;flex-direction:column;align-items:center;justify-content:center;font-size:14px;color:#666;white-space:nowrap"><span style="position:relative;top:1px">未绑定</span></div>
<div class="abs" style="left:821px;width:96px;top:118px;height:39px;display:flex;flex-direction:column;align-items:center;justify-content:center;font-size:14px;color:#666;white-space:nowrap"><span style="font-size:15px;letter-spacing:-0.4px">0</span></div>
<div class="abs" style="left:917px;width:96px;top:118px;height:39px;display:flex;flex-direction:column;align-items:center;justify-content:center;font-size:14px;color:#666;white-space:nowrap"><span style="font-size:15px;letter-spacing:-0.4px">0</span></div>
<div class="abs" style="left:1013px;width:96px;top:118px;height:39px;display:flex;flex-direction:column;align-items:center;justify-content:center;font-size:14px;color:#666;white-space:nowrap"><span style="font-size:15px;letter-spacing:-0.4px">0</span></div>
<div class="abs" style="left:16px;top:168px;width:18px;height:18px;border:1px solid #d0d0d0;border-radius:2px;background:#fff"></div>
<div class="abs" style="left:49px;width:181px;top:157px;height:39px;display:flex;flex-direction:column;align-items:center;justify-content:center;font-size:14px;color:#1668c9;white-space:nowrap"><span style="font-size:15px;letter-spacing:-0.4px">70372551479</span></div>
<div class="abs" style="left:230px;width:96px;top:157px;height:39px;display:flex;flex-direction:column;align-items:center;justify-content:center;font-size:14px;color:#666;white-space:nowrap"><span style="position:relative;top:1px">陈晓嘉</span></div>
<div class="abs" style="left:326px;width:121px;top:157px;height:39px;display:flex;flex-direction:column;align-items:center;justify-content:center;font-size:14px;color:#666;white-space:nowrap"></div>
<div class="abs" style="left:447px;width:96px;top:157px;height:39px;display:flex;flex-direction:column;align-items:center;justify-content:center;font-size:14px;color:#666;white-space:nowrap"><span style="position:relative;top:1px">有效期1年</span></div>
<div class="abs" style="left:543px;width:96px;top:157px;height:39px;display:flex;flex-direction:column;align-items:center;justify-content:center;font-size:14px;color:#666;white-space:nowrap"></div>
<div class="abs" style="left:639px;width:96px;top:157px;height:39px;display:flex;flex-direction:column;align-items:center;justify-content:center;font-size:14px;color:#666;white-space:nowrap"><span style="font-size:15px;letter-spacing:-0.4px">365</span></div>
<div class="abs" style="left:735px;width:86px;top:157px;height:39px;display:flex;flex-direction:column;align-items:center;justify-content:center;font-size:14px;color:#666;white-space:nowrap"><span style="position:relative;top:1px">未绑定</span></div>
<div class="abs" style="left:821px;width:96px;top:157px;height:39px;display:flex;flex-direction:column;align-items:center;justify-content:center;font-size:14px;color:#666;white-space:nowrap"><span style="font-size:15px;letter-spacing:-0.4px">14</span></div>
<div class="abs" style="left:917px;width:96px;top:157px;height:39px;display:flex;flex-direction:column;align-items:center;justify-content:center;font-size:14px;color:#666;white-space:nowrap"><span style="font-size:15px;letter-spacing:-0.4px">0</span></div>
<div class="abs" style="left:1013px;width:96px;top:157px;height:39px;display:flex;flex-direction:column;align-items:center;justify-content:center;font-size:14px;color:#666;white-space:nowrap"><span style="font-size:15px;letter-spacing:-0.4px">0</span></div>
<div class="abs" style="left:16px;top:213px;width:18px;height:18px;border:1px solid #d0d0d0;border-radius:2px;background:#fff"></div>
<div class="abs" style="left:49px;width:181px;top:195px;height:50px;display:flex;flex-direction:column;align-items:center;justify-content:center;font-size:14px;color:#1668c9;white-space:nowrap"><span style="font-size:15px;letter-spacing:-0.4px">110</span></div>
<div class="abs" style="left:230px;width:96px;top:195px;height:50px;display:flex;flex-direction:column;align-items:center;justify-content:center;font-size:14px;color:#666;white-space:nowrap"><div style="height:10px;line-height:8px;margin-bottom:4px;position:relative;top:-2px"><span style="display:inline-block;width:8px;height:8px;border-radius:4px;background:#f0522d;margin:0 1px"></span></div><div style="line-height:18px">pika</div></div>
<div class="abs" style="left:326px;width:121px;top:195px;height:50px;display:flex;flex-direction:column;align-items:center;justify-content:center;font-size:14px;color:#666;white-space:nowrap"></div>
<div class="abs" style="left:447px;width:96px;top:195px;height:50px;display:flex;flex-direction:column;align-items:center;justify-content:center;font-size:14px;color:#666;white-space:nowrap"><span style="position:relative;top:1px">黄金会员</span></div>
<div class="abs" style="left:543px;width:96px;top:195px;height:50px;display:flex;flex-direction:column;align-items:center;justify-content:center;font-size:14px;color:#666;white-space:nowrap"></div>
<div class="abs" style="left:639px;width:96px;top:195px;height:50px;display:flex;flex-direction:column;align-items:center;justify-content:center;font-size:14px;color:#666;white-space:nowrap"><span style="font-size:15px;letter-spacing:-0.4px">0</span></div>
<div class="abs" style="left:735px;width:86px;top:195px;height:50px;display:flex;flex-direction:column;align-items:center;justify-content:center;font-size:14px;color:#666;white-space:nowrap"><span style="position:relative;top:1px">未绑定</span></div>
<div class="abs" style="left:821px;width:96px;top:195px;height:50px;display:flex;flex-direction:column;align-items:center;justify-content:center;font-size:14px;color:#666;white-space:nowrap"><span style="font-size:15px;letter-spacing:-0.4px">5</span></div>
<div class="abs" style="left:917px;width:96px;top:195px;height:50px;display:flex;flex-direction:column;align-items:center;justify-content:center;font-size:14px;color:#666;white-space:nowrap"><span style="font-size:15px;letter-spacing:-0.4px">1000</span></div>
<div class="abs" style="left:1013px;width:96px;top:195px;height:50px;display:flex;flex-direction:column;align-items:center;justify-content:center;font-size:14px;color:#666;white-space:nowrap"><span style="font-size:15px;letter-spacing:-0.4px">500</span></div>
<div class="abs" style="left:16px;top:263px;width:18px;height:18px;border:1px solid #d0d0d0;border-radius:2px;background:#fff"></div>
<div class="abs" style="left:49px;width:181px;top:245px;height:50px;display:flex;flex-direction:column;align-items:center;justify-content:center;font-size:14px;color:#1668c9;white-space:nowrap"><span style="font-size:15px;letter-spacing:-0.4px">9803</span></div>
<div class="abs" style="left:230px;width:96px;top:245px;height:50px;display:flex;flex-direction:column;align-items:center;justify-content:center;font-size:14px;color:#666;white-space:nowrap"><div style="height:10px;line-height:8px;margin-bottom:4px;position:relative;top:-2px"><span style="display:inline-block;width:8px;height:8px;border-radius:4px;background:#bb94ec;margin:0 1px"></span></div><div style="line-height:18px">lau</div></div>
<div class="abs" style="left:326px;width:121px;top:245px;height:50px;display:flex;flex-direction:column;align-items:center;justify-content:center;font-size:14px;color:#666;white-space:nowrap"></div>
<div class="abs" style="left:447px;width:96px;top:245px;height:50px;display:flex;flex-direction:column;align-items:center;justify-content:center;font-size:14px;color:#666;white-space:nowrap"><span style="position:relative;top:1px">黄金会员</span></div>
<div class="abs" style="left:543px;width:96px;top:245px;height:50px;display:flex;flex-direction:column;align-items:center;justify-content:center;font-size:14px;color:#666;white-space:nowrap"></div>
<div class="abs" style="left:639px;width:96px;top:245px;height:50px;display:flex;flex-direction:column;align-items:center;justify-content:center;font-size:14px;color:#666;white-space:nowrap"><span style="font-size:15px;letter-spacing:-0.4px">0</span></div>
<div class="abs" style="left:735px;width:86px;top:245px;height:50px;display:flex;flex-direction:column;align-items:center;justify-content:center;font-size:14px;color:#666;white-space:nowrap"><span style="position:relative;top:1px">未绑定</span></div>
<div class="abs" style="left:821px;width:96px;top:245px;height:50px;display:flex;flex-direction:column;align-items:center;justify-content:center;font-size:14px;color:#666;white-space:nowrap"><span style="font-size:15px;letter-spacing:-0.4px">0</span></div>
<div class="abs" style="left:917px;width:96px;top:245px;height:50px;display:flex;flex-direction:column;align-items:center;justify-content:center;font-size:14px;color:#666;white-space:nowrap"><span style="font-size:15px;letter-spacing:-0.4px">43.56</span></div>
<div class="abs" style="left:1013px;width:96px;top:245px;height:50px;display:flex;flex-direction:column;align-items:center;justify-content:center;font-size:14px;color:#666;white-space:nowrap"><span style="font-size:15px;letter-spacing:-0.4px">21.78</span></div>
<div class="abs" style="left:16px;top:307px;width:18px;height:18px;border:1px solid #d0d0d0;border-radius:2px;background:#fff"></div>
<div class="abs" style="left:49px;width:181px;top:296px;height:39px;display:flex;flex-direction:column;align-items:center;justify-content:center;font-size:14px;color:#1668c9;white-space:nowrap"><span style="font-size:15px;letter-spacing:-0.4px">88888888</span></div>
<div class="abs" style="left:230px;width:96px;top:296px;height:39px;display:flex;flex-direction:column;align-items:center;justify-content:center;font-size:14px;color:#666;white-space:nowrap"><span style="font-size:15px;letter-spacing:-0.4px">888</span></div>
<div class="abs" style="left:326px;width:121px;top:296px;height:39px;display:flex;flex-direction:column;align-items:center;justify-content:center;font-size:14px;color:#666;white-space:nowrap"></div>
<div class="abs" style="left:447px;width:96px;top:296px;height:39px;display:flex;flex-direction:column;align-items:center;justify-content:center;font-size:14px;color:#666;white-space:nowrap"><span style="position:relative;top:1px">黄金会员</span></div>
<div class="abs" style="left:543px;width:96px;top:296px;height:39px;display:flex;flex-direction:column;align-items:center;justify-content:center;font-size:14px;color:#666;white-space:nowrap"></div>
<div class="abs" style="left:639px;width:96px;top:296px;height:39px;display:flex;flex-direction:column;align-items:center;justify-content:center;font-size:14px;color:#666;white-space:nowrap"><span style="font-size:15px;letter-spacing:-0.4px">0</span></div>
<div class="abs" style="left:735px;width:86px;top:296px;height:39px;display:flex;flex-direction:column;align-items:center;justify-content:center;font-size:14px;color:#666;white-space:nowrap"><span style="position:relative;top:1px">未绑定</span></div>
<div class="abs" style="left:821px;width:96px;top:296px;height:39px;display:flex;flex-direction:column;align-items:center;justify-content:center;font-size:14px;color:#666;white-space:nowrap"><span style="font-size:15px;letter-spacing:-0.4px">0</span></div>
<div class="abs" style="left:917px;width:96px;top:296px;height:39px;display:flex;flex-direction:column;align-items:center;justify-content:center;font-size:14px;color:#666;white-space:nowrap"><span style="font-size:15px;letter-spacing:-0.4px">0</span></div>
<div class="abs" style="left:1013px;width:96px;top:296px;height:39px;display:flex;flex-direction:column;align-items:center;justify-content:center;font-size:14px;color:#666;white-space:nowrap"><span style="font-size:15px;letter-spacing:-0.4px">0</span></div>
<div class="abs" style="left:16px;top:352px;width:18px;height:18px;border:1px solid #d0d0d0;border-radius:2px;background:#fff"></div>
<div class="abs" style="left:49px;width:181px;top:334px;height:50px;display:flex;flex-direction:column;align-items:center;justify-content:center;font-size:14px;color:#1668c9;white-space:nowrap"><span style="font-size:15px;letter-spacing:-0.4px">880088</span></div>
<div class="abs" style="left:230px;width:96px;top:334px;height:50px;display:flex;flex-direction:column;align-items:center;justify-content:center;font-size:14px;color:#666;white-space:nowrap"><div style="height:10px;line-height:8px;margin-bottom:4px;position:relative;top:-2px"><span style="display:inline-block;width:8px;height:8px;border-radius:4px;background:#f0522d;margin:0 1px"></span><span style="display:inline-block;width:8px;height:8px;border-radius:4px;background:#bb94ec;margin:0 1px"></span></div><div style="line-height:18px">哈哈</div></div>
<div class="abs" style="left:326px;width:121px;top:334px;height:50px;display:flex;flex-direction:column;align-items:center;justify-content:center;font-size:14px;color:#666;white-space:nowrap"><span style="font-size:15px;letter-spacing:-0.4px">15737248273</span></div>
<div class="abs" style="left:447px;width:96px;top:334px;height:50px;display:flex;flex-direction:column;align-items:center;justify-content:center;font-size:14px;color:#666;white-space:nowrap"><span style="position:relative;top:1px">黄金会员</span></div>
<div class="abs" style="left:543px;width:96px;top:334px;height:50px;display:flex;flex-direction:column;align-items:center;justify-content:center;font-size:14px;color:#666;white-space:nowrap"></div>
<div class="abs" style="left:639px;width:96px;top:334px;height:50px;display:flex;flex-direction:column;align-items:center;justify-content:center;font-size:14px;color:#666;white-space:nowrap"><span style="font-size:15px;letter-spacing:-0.4px">0</span></div>
<div class="abs" style="left:735px;width:86px;top:334px;height:50px;display:flex;flex-direction:column;align-items:center;justify-content:center;font-size:14px;color:#666;white-space:nowrap"><span style="position:relative;top:1px">未绑定</span></div>
<div class="abs" style="left:821px;width:96px;top:334px;height:50px;display:flex;flex-direction:column;align-items:center;justify-content:center;font-size:14px;color:#666;white-space:nowrap"><span style="font-size:15px;letter-spacing:-0.4px">6</span></div>
<div class="abs" style="left:917px;width:96px;top:334px;height:50px;display:flex;flex-direction:column;align-items:center;justify-content:center;font-size:14px;color:#666;white-space:nowrap"><span style="font-size:15px;letter-spacing:-0.4px">957</span></div>
<div class="abs" style="left:1013px;width:96px;top:334px;height:50px;display:flex;flex-direction:column;align-items:center;justify-content:center;font-size:14px;color:#666;white-space:nowrap"><span style="font-size:15px;letter-spacing:-0.4px">478.5</span></div>
<div class="abs" style="left:16px;top:396px;width:18px;height:18px;border:1px solid #d0d0d0;border-radius:2px;background:#fff"></div>
<div class="abs" style="left:49px;width:181px;top:385px;height:39px;display:flex;flex-direction:column;align-items:center;justify-content:center;font-size:14px;color:#1668c9;white-space:nowrap"><span style="font-size:15px;letter-spacing:-0.4px">18003280573</span></div>
<div class="abs" style="left:230px;width:96px;top:385px;height:39px;display:flex;flex-direction:column;align-items:center;justify-content:center;font-size:14px;color:#666;white-space:nowrap"><span style="font-size:15px;letter-spacing:-0.4px">180032805...</span></div>
<div class="abs" style="left:326px;width:121px;top:385px;height:39px;display:flex;flex-direction:column;align-items:center;justify-content:center;font-size:14px;color:#666;white-space:nowrap"><span style="font-size:15px;letter-spacing:-0.4px">18003280573</span></div>
<div class="abs" style="left:447px;width:96px;top:385px;height:39px;display:flex;flex-direction:column;align-items:center;justify-content:center;font-size:14px;color:#666;white-space:nowrap"><span style="position:relative;top:1px">黄金会员</span></div>
<div class="abs" style="left:543px;width:96px;top:385px;height:39px;display:flex;flex-direction:column;align-items:center;justify-content:center;font-size:14px;color:#666;white-space:nowrap"></div>
<div class="abs" style="left:639px;width:96px;top:385px;height:39px;display:flex;flex-direction:column;align-items:center;justify-content:center;font-size:14px;color:#666;white-space:nowrap"><span style="font-size:15px;letter-spacing:-0.4px">0</span></div>
<div class="abs" style="left:735px;width:86px;top:385px;height:39px;display:flex;flex-direction:column;align-items:center;justify-content:center;font-size:14px;color:#666;white-space:nowrap"><span style="position:relative;top:1px">未绑定</span></div>
<div class="abs" style="left:821px;width:96px;top:385px;height:39px;display:flex;flex-direction:column;align-items:center;justify-content:center;font-size:14px;color:#666;white-space:nowrap"><span style="font-size:15px;letter-spacing:-0.4px">0</span></div>
<div class="abs" style="left:917px;width:96px;top:385px;height:39px;display:flex;flex-direction:column;align-items:center;justify-content:center;font-size:14px;color:#666;white-space:nowrap"><span style="font-size:15px;letter-spacing:-0.4px">0</span></div>
<div class="abs" style="left:1013px;width:96px;top:385px;height:39px;display:flex;flex-direction:column;align-items:center;justify-content:center;font-size:14px;color:#666;white-space:nowrap"><span style="font-size:15px;letter-spacing:-0.4px">0</span></div>
<div class="abs" style="left:16px;top:435px;width:18px;height:18px;border:1px solid #d0d0d0;border-radius:2px;background:#fff"></div>
<div class="abs" style="left:49px;width:181px;top:424px;height:39px;display:flex;flex-direction:column;align-items:center;justify-content:center;font-size:14px;color:#1668c9;white-space:nowrap"></div>
<div class="abs" style="left:230px;width:96px;top:424px;height:39px;display:flex;flex-direction:column;align-items:center;justify-content:center;font-size:14px;color:#666;white-space:nowrap"></div>
<div class="abs" style="left:326px;width:121px;top:424px;height:39px;display:flex;flex-direction:column;align-items:center;justify-content:center;font-size:14px;color:#666;white-space:nowrap"></div>
<div class="abs" style="left:447px;width:96px;top:424px;height:39px;display:flex;flex-direction:column;align-items:center;justify-content:center;font-size:14px;color:#666;white-space:nowrap"></div>
<div class="abs" style="left:543px;width:96px;top:424px;height:39px;display:flex;flex-direction:column;align-items:center;justify-content:center;font-size:14px;color:#666;white-space:nowrap"></div>
<div class="abs" style="left:639px;width:96px;top:424px;height:39px;display:flex;flex-direction:column;align-items:center;justify-content:center;font-size:14px;color:#666;white-space:nowrap"></div>
<div class="abs" style="left:735px;width:86px;top:424px;height:39px;display:flex;flex-direction:column;align-items:center;justify-content:center;font-size:14px;color:#666;white-space:nowrap"></div>
<div class="abs" style="left:821px;width:96px;top:424px;height:39px;display:flex;flex-direction:column;align-items:center;justify-content:center;font-size:14px;color:#666;white-space:nowrap"></div>
<div class="abs" style="left:917px;width:96px;top:424px;height:39px;display:flex;flex-direction:column;align-items:center;justify-content:center;font-size:14px;color:#666;white-space:nowrap"></div>
<div class="abs" style="left:1013px;width:96px;top:424px;height:39px;display:flex;flex-direction:column;align-items:center;justify-content:center;font-size:14px;color:#666;white-space:nowrap"></div>
</div>
</div>
<div class="abs" style="left:1341px;top:99px;width:13px;height:643px;background:#f1f1f1">
<svg style="left:3px;top:4px" width="8" height="5"><path d="M0 4.5 H7 L3.5 0.5 Z" fill="#a3a3a3"/></svg>
<div class="abs" style="left:1px;top:13px;width:10px;height:322px;background:#bfbfbf"></div>
<svg style="left:3px;top:635px" width="8" height="5"><path d="M0 0.5 H7 L3.5 4.5 Z" fill="#000"/></svg>
</div>
</body></html>
